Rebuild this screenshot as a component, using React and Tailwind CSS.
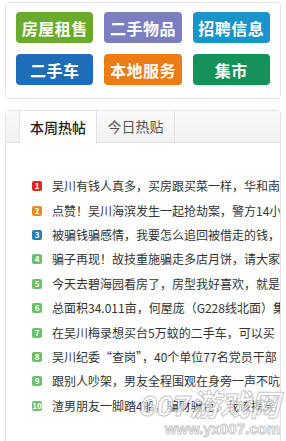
const cats = [
  { name: "房屋租售", color: "bg-[#6aab2e]" },
  { name: "二手物品", color: "bg-[#7b7fc2]" },
  { name: "招聘信息", color: "bg-[#1b95c9]" },
  { name: "二手车", color: "bg-[#1f6db9]" },
  { name: "本地服务", color: "bg-[#ee7c14]" },
  { name: "集市", color: "bg-[#159257]" },
];

const posts = [
  "吴川有钱人真多，买房跟买菜一样，华和南",
  "点赞！吴川海滨发生一起抢劫案，警方14小",
  "被骗钱骗感情，我要怎么追回被借走的钱，",
  "骗子再现！故技重施骗走多店月饼，请大家",
  "今天去碧海园看房了，房型我好喜欢，就是",
  "总面积34.011亩，何屋庞（G228线北面）集",
  "在吴川梅录想买台5万蚊的二手车，可以买",
  "吴川纪委“查岗”，40个单位77名党员干部",
  "跟别人吵架，男友全程围观在身旁一声不吭",
  "渣男朋友一脚踏4船，骗财骗色，我该揭穿",
];

function badgeColor(i) {
  if (i === 0) return "bg-[#e3262b]";
  if (i === 1) return "bg-[#e5892a]";
  if (i === 2) return "bg-[#2a7db3]";
  return "bg-[#6cc06f]";
}

export default function App() {
  return (
    <div className="relative w-[286px] h-[441px] overflow-hidden bg-white font-['Noto_Sans_CJK_SC',sans-serif]">
      {/* category buttons */}
      <div className="mx-[5px] mt-[2px] h-[97px] border border-[#e3e3e3] rounded-[4px] px-[10px] pt-[9px]">
        <div className="grid grid-cols-3 gap-x-[11px] gap-y-[11px]">
          {cats.map((c) => (
            <div
              key={c.name}
              className={`${c.color} h-[31px] rounded-[4px] flex items-center justify-center text-white text-[16px] font-bold tracking-[0.5px]`}
            >
              {c.name}
            </div>
          ))}
        </div>
      </div>

      {/* hot posts */}
      <div className="mx-[5px] mt-[11px] border border-[#e3e3e3] rounded-t-[4px] h-[340px] overflow-hidden">
        <div className="flex h-[32px] bg-gradient-to-b from-[#fafafa] to-[#f1f1f1] border-b border-[#e2e2e2]">
          <div className="w-[14px] border-r border-[#e2e2e2]" />
          <div className="w-[77px] h-[33px] bg-white border-r border-[#e2e2e2] flex items-center justify-center text-[14px] text-[#222] font-medium">
            本周热帖
          </div>
          <div className="w-[78px] border-r border-[#e2e2e2] flex items-center justify-center text-[14px] text-[#555]">
            今日热贴
          </div>
        </div>
        <ul className="pt-[31px] pl-[26px]">
          {posts.map((p, i) => (
            <li key={i} className="h-[24.4px] flex items-center whitespace-nowrap">
              <span
                className={`${badgeColor(i)} w-[10px] h-[10px] rounded-[2px] text-white text-[8px] leading-[10px] font-bold flex items-center justify-center shrink-0`}
              >
                {i + 1}
              </span>
              <span className="ml-[10px] text-[12px] text-[#333]">{p}</span>
            </li>
          ))}
        </ul>
      </div>

      {/* watermark */}
      <div className="absolute right-[6px] bottom-[4px] flex flex-col items-end pointer-events-none select-none">
        <span className="text-[30px] leading-[30px] font-bold italic text-white/60 [-webkit-text-stroke:1px_#c8c8c8] font-['Liberation_Sans','Noto_Sans_CJK_SC',sans-serif]">
          007游戏网
        </span>
        <span className="text-[15px] leading-[16px] font-bold text-white/60 [-webkit-text-stroke:1px_#c8c8c8] font-['Liberation_Sans',sans-serif]">
          www.yx007.com
        </span>
      </div>
    </div>
  );
}
